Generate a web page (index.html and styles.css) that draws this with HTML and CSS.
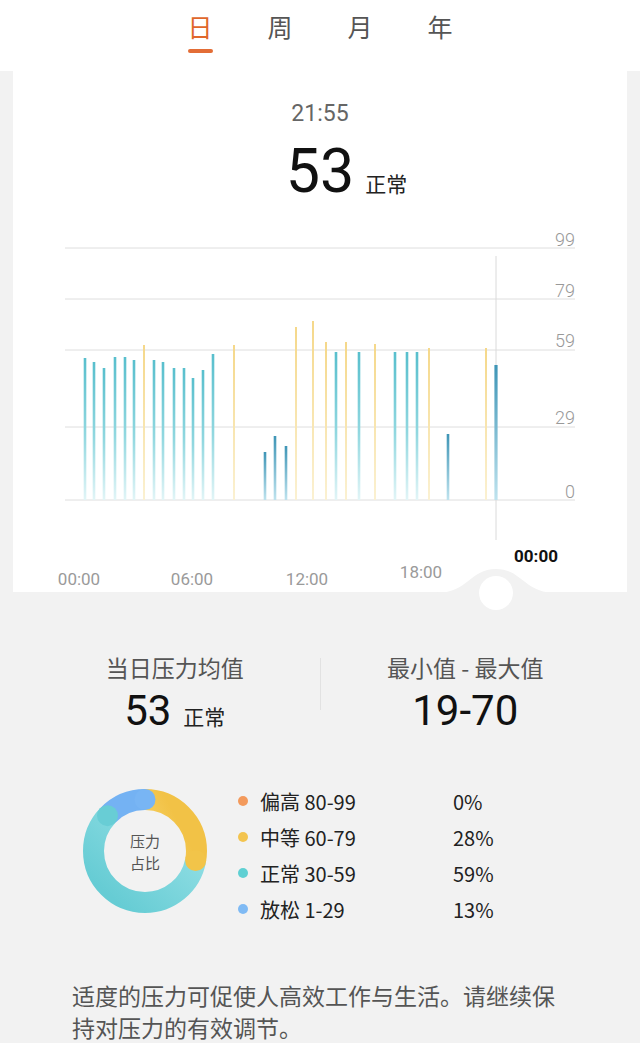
FILE: index.html
```html
<!DOCTYPE html>
<html lang="zh-CN">
<head>
  <meta charset="UTF-8" />
  <meta name="viewport" content="width=device-width, initial-scale=1" />
  <title>压力</title>
  <link rel="stylesheet" href="styles.css">
</head>
<body>
  <div class="tabs">
    <div class="tab active">日</div>
    <div class="tab">周</div>
    <div class="tab">月</div>
    <div class="tab">年</div>
  </div>

  <div class="card">
    <div class="now-time">21:55</div>
    <div class="now-value">
      <span class="now-num">53</span>
      <span class="now-level">正常</span>
    </div>

    <!-- viewBox uses page coordinates so the numbers read like the screen -->
    <svg class="chart" viewBox="13 220 614 372" width="614" height="372">
      <defs>
        <linearGradient id="gTeal" x1="0" y1="0" x2="0" y2="1">
          <stop offset="0" stop-color="#58bfcd" />
          <stop offset="0.55" stop-color="#92d8e0" />
          <stop offset="1" stop-color="#e2f5f7" />
        </linearGradient>
        <linearGradient id="gYellow" x1="0" y1="0" x2="0" y2="1">
          <stop offset="0" stop-color="#f5d88a" />
          <stop offset="1" stop-color="#fbf1d2" />
        </linearGradient>
        <linearGradient id="gBlue" x1="0" y1="0" x2="0" y2="1">
          <stop offset="0" stop-color="#3e95b6" />
          <stop offset="1" stop-color="#bfe3ee" />
        </linearGradient>
      </defs>

      <g class="grid">
        <line x1="65" y1="248" x2="575" y2="248" />
        <line x1="65" y1="299" x2="575" y2="299" />
        <line x1="65" y1="350" x2="575" y2="350" />
        <line x1="65" y1="427" x2="575" y2="427" />
        <line x1="65" y1="500" x2="575" y2="500" />
      </g>
      <g class="y-labels">
        <text x="575" y="246">99</text>
        <text x="575" y="297">79</text>
        <text x="575" y="347">59</text>
        <text x="575" y="424">29</text>
        <text x="575" y="498">0</text>
      </g>

      <line class="cursor" x1="496" y1="256" x2="496" y2="540" />
      <g id="bars"></g>

      <path class="bump" d="M 436 593 C 468 593 470 569 496 569 C 522 569 524 593 556 593 Z" />
      <circle class="handle" cx="496" cy="593" r="17" />

      <g class="x-labels">
        <text x="79" y="585">00:00</text>
        <text x="192" y="585">06:00</text>
        <text x="307" y="585">12:00</text>
        <text x="421" y="578">18:00</text>
        <text class="current" x="536" y="562">00:00</text>
      </g>
    </svg>
  </div>

  <div class="summary">
    <div class="stat">
      <div class="stat-title">当日压力均值</div>
      <div class="stat-value">53<small>正常</small></div>
    </div>
    <div class="divider"></div>
    <div class="stat">
      <div class="stat-title">最小值 - 最大值</div>
      <div class="stat-value">19-70</div>
    </div>
  </div>

  <div class="ratio">
    <svg class="donut" viewBox="0 0 130 130" width="130" height="130">
      <defs>
        <linearGradient id="dYellow" gradientUnits="userSpaceOnUse" x1="70" y1="14" x2="110" y2="90">
          <stop offset="0" stop-color="#fde690" />
          <stop offset="1" stop-color="#f2c246" />
        </linearGradient>
        <linearGradient id="dTeal" gradientUnits="userSpaceOnUse" x1="20" y1="30" x2="110" y2="110">
          <stop offset="0" stop-color="#66ccd4" />
          <stop offset="1" stop-color="#9ce3e8" />
        </linearGradient>
        <linearGradient id="dBlue" gradientUnits="userSpaceOnUse" x1="25" y1="30" x2="70" y2="12">
          <stop offset="0" stop-color="#acd4fa" />
          <stop offset="1" stop-color="#74b2f3" />
        </linearGradient>
      </defs>
      <g transform="rotate(-90 65 65)" fill="none" stroke-width="21">
        <circle cx="65" cy="65" r="51.5" stroke="url(#dYellow)" stroke-dasharray="90.6 233" stroke-dashoffset="0" />
        <circle cx="65" cy="65" r="51.5" stroke="url(#dTeal)" stroke-dasharray="191 132.6" stroke-dashoffset="-90.6" />
        <circle cx="65" cy="65" r="51.5" stroke="url(#dBlue)" stroke-dasharray="42.1 281.5" stroke-dashoffset="-281.5" />
      </g>
      <!-- rounded segment ends -->
      <circle cx="115.6" cy="74.6" r="10.5" fill="#f2c449" />
      <circle cx="27.5" cy="29.7" r="10.5" fill="#68cdd5" />
      <circle cx="65" cy="13.5" r="10.5" fill="#78b5f4" />
      <text class="donut-label" x="65" y="61">压力</text>
      <text class="donut-label" x="65" y="83">占比</text>
    </svg>

    <div class="legend">
      <div class="legend-row"><span class="dot high"></span><span class="range">偏高 80-99</span><span>0%</span></div>
      <div class="legend-row"><span class="dot mid"></span><span class="range">中等 60-79</span><span>28%</span></div>
      <div class="legend-row"><span class="dot normal"></span><span class="range">正常 30-59</span><span>59%</span></div>
      <div class="legend-row"><span class="dot relax"></span><span class="range">放松 1-29</span><span>13%</span></div>
    </div>
  </div>

  <p class="tip">适度的压力可促使人高效工作与生活。请继续保持对压力的有效调节。</p>

  <script>
    // 各時点の値: [x, 棒の上端y, 種類]  t=正常 y=中等 b=放松
    const data = [
      [85, 358, 't'], [94, 362, 't'], [104, 368, 't'], [115, 357, 't'], [125, 357, 't'], [134, 360, 't'],
      [144, 345, 'y'],
      [154, 360, 't'], [163, 362, 't'], [174, 368, 't'], [184, 368, 't'], [193, 378, 't'], [203, 370, 't'], [213, 354, 't'],
      [234, 345, 'y'],
      [265, 452, 'b'], [275, 436, 'b'], [286, 446, 'b'],
      [296, 327, 'y'], [313, 321, 'y'], [326, 342, 'y'], [336, 352, 't'], [346, 342, 'y'], [359, 352, 't'],
      [375, 344, 'y'], [395, 352, 't'], [407, 352, 't'], [417, 352, 't'], [429, 348, 'y'],
      [448, 434, 'b'], [486, 348, 'y'], [496, 365, 'b']
    ];
    const fills = { t: 'url(#gTeal)', y: 'url(#gYellow)', b: 'url(#gBlue)' };
    const bars = document.getElementById('bars');
    const base = 500;

    data.forEach(([x, top, kind], i) => {
      const w = i === data.length - 1 ? 3.2 : (kind === 'y' ? 2 : 2.6);
      const rect = document.createElementNS('http://www.w3.org/2000/svg', 'rect');
      rect.setAttribute('x', x - w / 2);
      rect.setAttribute('y', top);
      rect.setAttribute('width', w);
      rect.setAttribute('height', base - top);
      rect.setAttribute('fill', fills[kind]);
      bars.appendChild(rect);
    });
  </script>
</body>
</html>
```

FILE: styles.css
```css
body {
  margin: 0;
  background: #f2f2f2;
  font-family: "Noto Sans CJK SC", "Noto Sans", sans-serif;
  color: #222;
}

/* 数字だけの所は Roboto */
.now-time, .now-num, .stat-value, .chart text {
  font-family: Roboto, "Noto Sans CJK SC", sans-serif;
}

/* 日 / 周 / 月 / 年 */
.tabs {
  display: flex;
  justify-content: center;
  height: 71px;
  background: #fff;
}
.tab {
  width: 80px;
  padding-top: 9px;
  text-align: center;
  font-size: 25px;
  line-height: 34px;
  color: #555;
}
.tab.active { color: #e0672c; }
.tab.active::after {
  content: '';
  display: block;
  width: 25px;
  height: 4px;
  margin: 6px auto 0;
  border-radius: 2px;
  background: #e36d36;
}

/* 上のカード */
.card {
  width: 614px;
  height: 521px;
  margin-left: 13px;
  background: #fff;
}
.now-time {
  padding-top: 28px;
  text-align: center;
  font-size: 23px;
  line-height: 30px;
  color: #666;
}
.now-value {
  display: grid;
  grid-template-columns: 1fr auto 1fr;
  align-items: baseline;
  column-gap: 11px;
  margin-top: 10px;
}
.now-num {
  grid-column: 2;
  font-size: 61px;
  line-height: 64px;
  color: #111;
}
.now-level {
  justify-self: start;
  font-size: 21px;
  color: #222;
}

.chart {
  display: block;
  margin-top: 17px;
  overflow: visible;
}
.grid line { stroke: #dedede; stroke-width: 1; }
.y-labels text {
  text-anchor: end;
  font-size: 18px;
  font-weight: 300;
  fill: #999;
}
.x-labels text {
  text-anchor: middle;
  font-size: 17px;
  fill: #9a9a9a;
}
.x-labels .current { fill: #111; font-weight: 700; }
.cursor { stroke: #dadada; stroke-width: 1; }
.bump { fill: #f2f2f2; }
.handle { fill: #fff; }

/* 均値 / 最小値-最大値 */
.summary {
  display: grid;
  grid-template-columns: 1fr 1px 1fr;
  margin: 60px 30px 0;
  text-align: center;
}
.stat-title {
  font-size: 23px;
  line-height: 30px;
  color: #555;
}
.stat-value {
  margin-top: 5px;
  font-size: 42px;
  line-height: 48px;
  color: #111;
}
.stat-value small {
  margin-left: 12px;
  font-size: 21px;
  color: #222;
}
.divider {
  height: 52px;
  margin-top: 6px;
  background: #e2e2e2;
}

/* 圧力占比 */
.ratio {
  display: flex;
  align-items: flex-start;
  margin-top: 41px;
  padding-left: 80px;
}
.donut { display: block; margin-top: 3px; }
.donut-label {
  text-anchor: middle;
  font-size: 15px;
  fill: #555;
}
.legend { margin-left: 28px; }
.legend-row {
  display: flex;
  align-items: center;
  height: 36px;
  font-size: 20px;
  color: #222;
}
.dot {
  width: 10px;
  height: 10px;
  margin-right: 12px;
  border-radius: 50%;
}
.dot.high { background: #f39a5c; }
.dot.mid { background: #f3c44f; }
.dot.normal { background: #5fd0d3; }
.dot.relax { background: #7fbaf4; }
.range { width: 193px; }

.tip {
  width: 492px;
  margin: 52px 0 0;
  padding-left: 72px;
  font-size: 23px;
  line-height: 32px;
  color: #555;
}
```
